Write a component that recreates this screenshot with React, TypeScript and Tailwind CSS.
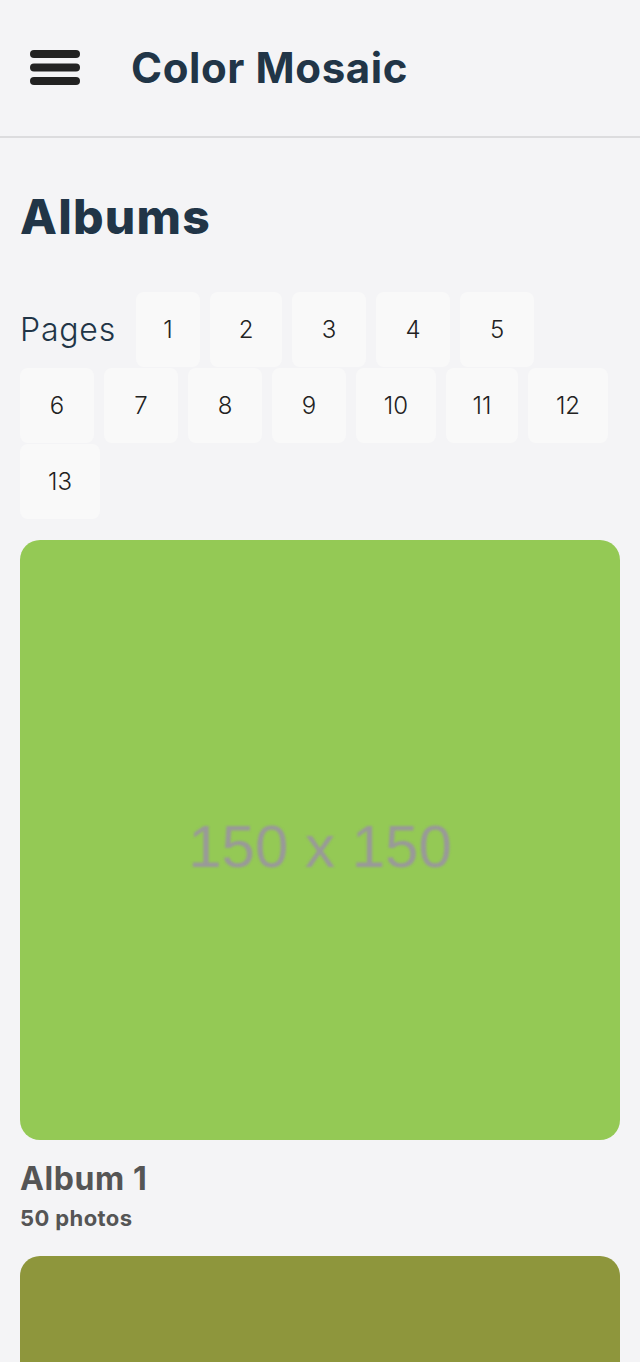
import React from "react";

const pages: { n: number; w: string }[] = [
  { n: 1, w: "w-[64px]" },
  { n: 2, w: "w-[72px]" },
  { n: 3, w: "w-[74px]" },
  { n: 4, w: "w-[74px]" },
  { n: 5, w: "w-[74px]" },
  { n: 6, w: "w-[74px]" },
  { n: 7, w: "w-[74px]" },
  { n: 8, w: "w-[74px]" },
  { n: 9, w: "w-[74px]" },
  { n: 10, w: "w-[80px]" },
  { n: 11, w: "w-[72px]" },
  { n: 12, w: "w-[80px]" },
  { n: 13, w: "w-[80px]" },
];

function Bars() {
  return (
    <svg width="50" height="36" viewBox="0 0 50 36" aria-hidden="true">
      <rect x="0" y="0" width="50" height="8" rx="4" fill="#222222" />
      <rect x="0" y="13.5" width="50" height="8" rx="4" fill="#222222" />
      <rect x="0" y="27" width="50" height="8" rx="4" fill="#222222" />
    </svg>
  );
}

function Album({ color, title, count }: { color: string; title: string; count: string }) {
  return (
    <div className="flex flex-col">
      <div
        className="w-full aspect-square rounded-[20px] flex items-center justify-center overflow-hidden"
        style={{ backgroundColor: color }}
      >
        <span className="mt-[14px] text-[60px] text-[#999999] blur-[1px] font-['Liberation_Sans',Arial,sans-serif] leading-none">
          150 x 150
        </span>
      </div>
      <div className="mt-[19px] text-[32px] font-bold text-[#555555] leading-[40px] tracking-[0.6px]">{title}</div>
      <div className="mt-[5px] text-[22px] font-bold text-[#555555] leading-[28px] tracking-[0.4px]">{count}</div>
    </div>
  );
}

export default function App() {
  return (
    <div className="min-h-screen bg-[#f4f4f6] font-['Inter','Noto_Sans',sans-serif]">
      <header className="h-[138px] border-b-[2px] border-[#dcdcde] flex items-center px-[30px]">
        <Bars />
        <h1 className="ml-[51px] text-[42px] font-bold text-[#213547] tracking-[0.6px] leading-none">Color Mosaic</h1>
      </header>
      <main className="px-5">
        <h2 className="mt-[50px] text-[48px] font-extrabold text-[#213547] leading-[58px] tracking-[1.2px]">Albums</h2>
        <div className="mt-[46px] flex flex-wrap items-center gap-y-px">
          <span className="w-[97px] mr-[19px] text-[32px] font-light text-[#213547] tracking-[0.8px]">Pages</span>
          {pages.map((p) => (
            <button
              key={p.n}
              className={`${p.w} h-[75px] mr-[10px] rounded-lg bg-[#f9f9f9] text-[24px] font-light text-[#222222] flex items-center justify-center`}
            >
              {p.n}
            </button>
          ))}
        </div>
        <div className="mt-[21px] flex flex-col gap-[24px]">
          <Album color="#94c955" title="Album 1" count="50 photos" />
          <Album color="#8e963c" title="Album 2" count="50 photos" />
        </div>
      </main>
    </div>
  );
}
